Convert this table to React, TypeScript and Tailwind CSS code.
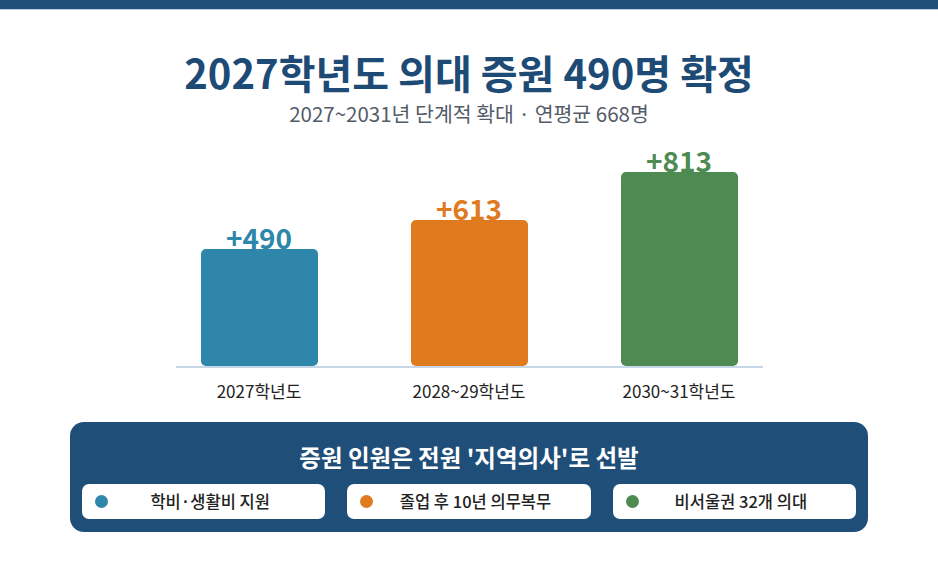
const bars = [
  { label: "2027학년도", value: 490, bar: "bg-[#2e86ab]", text: "text-[#2e86ab]" },
  { label: "2028~29학년도", value: 613, bar: "bg-[#e07a1f]", text: "text-[#e07a1f]" },
  { label: "2030~31학년도", value: 813, bar: "bg-[#4e8b52]", text: "text-[#4e8b52]" },
]

const points = [
  { dot: "bg-[#2e86ab]", text: "학비·생활비 지원" },
  { dot: "bg-[#e07a1f]", text: "졸업 후 10년 의무복무" },
  { dot: "bg-[#4e8b52]", text: "비서울권 32개 의대" },
]

const MAX = 813
const MAX_H = 194

export default function App() {
  return (
    <div
      className="w-[938px] h-[563px] bg-white overflow-hidden flex flex-col"
      style={{ fontFamily: '"Noto Sans CJK KR", "Noto Sans", sans-serif' }}
    >
      <div className="h-[10px] bg-[#1f4e79] border-b border-[#b9cde0]" />

      <div className="flex flex-col items-center">
        <h1 className="mt-[39px] text-[40px] leading-[46px] font-bold text-[#1d4b76]">
          2027학년도 의대 증원 490명 확정
        </h1>
        <p className="mt-[5px] text-[20.5px] leading-[26px] text-[#535c68]">
          2027~2031년 단계적 확대 · 연평균 668명
        </p>

        {/* chart */}
        <div className="h-[240px] flex items-end gap-[93px]">
          {bars.map((b) => (
            <div key={b.label} className="w-[117px] flex flex-col items-center">
              <span className={`text-[28px] leading-none font-bold mb-[-2px] ${b.text}`}>
                +{b.value}
              </span>
              <div
                className={`w-full rounded-[5px] ${b.bar}`}
                style={{ height: Math.round((b.value / MAX) * MAX_H) }}
              />
            </div>
          ))}
        </div>
        <div className="w-[587px] h-[2px] bg-[#c8d7e7]" />
        <div className="mt-[11px] flex gap-[93px]">
          {bars.map((b) => (
            <div
              key={b.label}
              className="w-[117px] text-center whitespace-nowrap text-[17px] leading-[24px] text-[#222222]"
            >
              {b.label}
            </div>
          ))}
        </div>

        {/* summary */}
        <div className="mt-[19px] w-[798px] rounded-[14px] bg-[#1f4e79] px-[12px] pt-[20px] pb-[13px]">
          <h2 className="text-center text-[23.5px] leading-[31px] font-bold text-white">
            증원 인원은 전원 '지역의사'로 선발
          </h2>
          <div className="mt-[11px] grid grid-cols-3 gap-[22px]">
            {points.map((p) => (
              <div
                key={p.text}
                className="h-[35px] rounded-[7px] bg-white flex items-center px-[13px]"
              >
                <span className={`w-[13px] h-[13px] rounded-full shrink-0 ${p.dot}`} />
                <span className="flex-1 text-center text-[16.5px] font-medium text-[#222222] whitespace-nowrap">
                  {p.text}
                </span>
              </div>
            ))}
          </div>
        </div>
      </div>
    </div>
  )
}
